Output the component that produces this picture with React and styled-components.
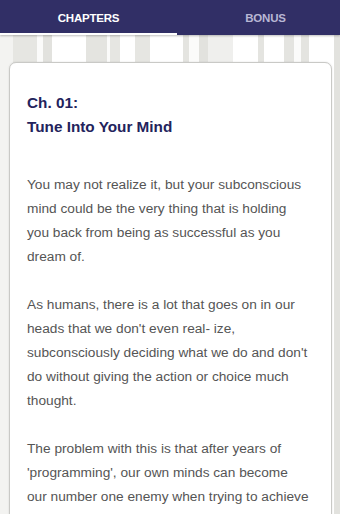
import React from "react";
import styled, { createGlobalStyle } from "styled-components";

const Global = createGlobalStyle`
  html, body { margin: 0; padding: 0; }
  body {
    width: 340px;
    height: 514px;
    overflow: hidden;
    font-family: "Liberation Sans", Arial, sans-serif;
    background: #ffffff;
  }
`;

const Screen = styled.div`
  width: 340px;
  height: 514px;
  display: flex;
  flex-direction: column;
  overflow: hidden;
`;

const TabBar = styled.div`
  height: 35px;
  flex: none;
  background: #312f66;
  display: flex;
  overflow: hidden;
  box-shadow: 0 1px 2px rgba(0, 0, 0, 0.25);
  position: relative;
  z-index: 1;
`;

const Tab = styled.div`
  flex: none;
  width: 177px;
  height: 35px;
  box-sizing: border-box;
  display: flex;
  align-items: center;
  justify-content: center;
  padding-top: 2px;
  font-size: 11.5px;
  font-weight: 700;
  letter-spacing: -0.2px;
  text-transform: uppercase;
  color: ${(p) => (p.$active ? "#ffffff" : "#b8b7d4")};
  border-bottom: 2px solid ${(p) => (p.$active ? "#ffffff" : "transparent")};
`;

const Body = styled.div`
  flex: 1;
  padding: 27px 8px 0 9px;
  background:
    linear-gradient(
      to right,
      #f3f3f1 0px, #f3f3f1 13px,
      #e6e6e2 13px, #e6e6e2 37px,
      #fbfbfa 37px, #fbfbfa 43px,
      #e2e2de 43px, #e2e2de 52px,
      #ffffff 52px, #ffffff 86px,
      #e4e4e0 86px, #e4e4e0 107px,
      #fbfbfa 107px, #fbfbfa 110px,
      #e6e6e2 110px, #e6e6e2 120px,
      #ffffff 120px, #ffffff 135px,
      #e6e6e2 135px, #e6e6e2 150px,
      #ffffff 150px, #ffffff 183px,
      #e4e4e0 183px, #e4e4e0 189px,
      #fbfbfa 189px, #fbfbfa 199px,
      #e2e2de 199px, #e2e2de 208px,
      #efefed 208px, #efefed 233px,
      #ffffff 233px, #ffffff 258px,
      #e4e4e0 258px, #e4e4e0 264px,
      #ffffff 264px, #ffffff 284px,
      #e4e4e0 284px, #e4e4e0 294px,
      #fbfbfa 294px, #fbfbfa 301px,
      #e4e4e0 301px, #e4e4e0 309px,
      #ffffff 309px, #ffffff 334px,
      #e2e2de 334px, #e2e2de 340px
    );
`;

const Card = styled.article`
  background: #ffffff;
  border: 1px solid #c9c9c6;
  border-radius: 7px;
  box-shadow: 0 0 2px rgba(0, 0, 0, 0.12);
  height: 600px;
  box-sizing: border-box;
  padding: 28px 4px 0 17px;
`;

const Heading = styled.h1`
  margin: 0 0 34px;
  font-size: 15.3px;
  font-weight: 700;
  line-height: 24px;
  color: #23235c;
`;

const Para = styled.p`
  margin: 0 0 24px;
  font-size: 13.7px;
  line-height: 24px;
  color: #555555;
  white-space: nowrap;
`;

const Line = styled.span`
  display: block;
`;

const paragraphs = [
  [
    "You may not realize it, but your subconscious",
    "mind could be the very thing that is holding",
    "you back from being as successful as you",
    "dream of.",
  ],
  [
    "As humans, there is a lot that goes on in our",
    "heads that we don't even real- ize,",
    "subconsciously deciding what we do and don't",
    "do without giving the action or choice much",
    "thought.",
  ],
  [
    "The problem with this is that after years of",
    "'programming', our own minds can become",
    "our number one enemy when trying to achieve",
  ],
];

export default function App() {
  return (
    <>
      <Global />
      <Screen>
        <TabBar>
          <Tab $active>Chapters</Tab>
          <Tab>Bonus</Tab>
        </TabBar>
        <Body>
          <Card>
            <Heading>
              Ch. 01:
              <br />
              Tune Into Your Mind
            </Heading>
            {paragraphs.map((lines, i) => (
              <Para key={i}>
                {lines.map((l, j) => (
                  <Line key={j}>{l}</Line>
                ))}
              </Para>
            ))}
          </Card>
        </Body>
      </Screen>
    </>
  );
}
